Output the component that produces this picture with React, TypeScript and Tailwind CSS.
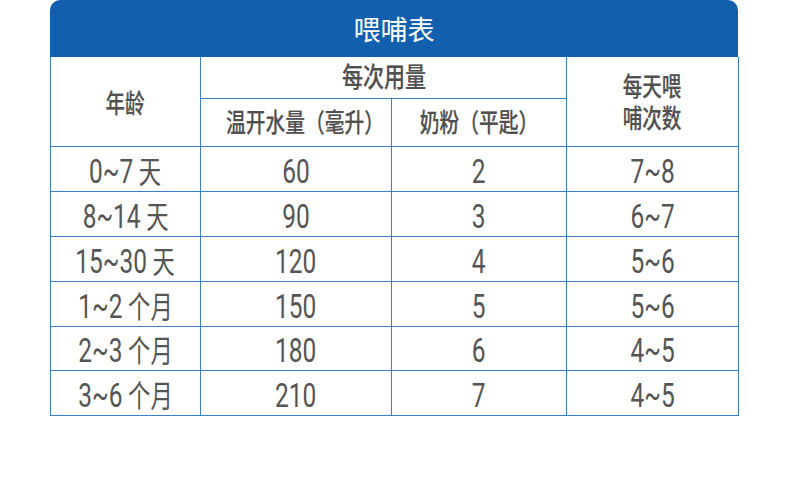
import React from "react";

const rows = [
  ["0~7", "天", "60", "2", "7~8", 45],
  ["8~14", "天", "90", "3", "6~7", 45],
  ["15~30", "天", "120", "4", "5~6", 45],
  ["1~2", "个月", "150", "5", "5~6", 45],
  ["2~3", "个月", "180", "6", "4~5", 44],
  ["3~6", "个月", "210", "7", "4~5", 45],
] as const;

const T = ({ children, cls = "" }: { children: React.ReactNode; cls?: string }) => (
  <span className={`inline-block origin-center whitespace-nowrap ${cls}`}>{children}</span>
);

const bd = "border border-[#3d7cc6] text-center align-middle p-0";
const hd = "font-medium [-webkit-text-stroke:0.2px_#505050]";

export default function App() {
  return (
    <div className="w-[790px] h-[480px] bg-white" style={{ fontFamily: 'Roboto, "Noto Sans CJK SC", sans-serif' }}>
      <div className="ml-[50px] w-[688px]">
        <div className="h-[57px] rounded-t-[10px] bg-[#1260ad] flex items-center justify-center text-white text-[27px] leading-none" style={{ fontFamily: '"Noto Sans CJK SC", sans-serif' }}>
          喂哺表
        </div>
        <table className="w-[688px] border-collapse table-fixed text-[#505050]">
          <colgroup>
            <col className="w-[150px]" />
            <col className="w-[191px]" />
            <col className="w-[175px]" />
            <col className="w-[172px]" />
          </colgroup>
          <tbody>
            <tr className="h-[41px]">
              <td rowSpan={2} className={`${bd} border-t-0 text-[26px] leading-none pt-[6px] ${hd}`}>
                <T cls="scale-x-[0.75]">年龄</T>
              </td>
              <td colSpan={2} className={`${bd} border-t-0 text-[27px] leading-none pt-[2px] ${hd}`}>
                <T cls="scale-x-[0.78]">每次用量</T>
              </td>
              <td rowSpan={2} className={`${bd} border-t-0 text-[26px] leading-[32px] pt-[4px] ${hd}`}>
                <T cls="scale-x-[0.75]">每天喂</T>
                <br />
                <T cls="scale-x-[0.75]">哺次数</T>
              </td>
            </tr>
            <tr className="h-[48px]">
              <td className={`${bd} text-[26px] leading-none pt-[2px] ${hd}`}>
                <T cls="scale-x-[0.76]">温开水量（毫升）</T>
              </td>
              <td className={`${bd} text-[26px] leading-none pt-[2px] ${hd}`}>
                <T cls="scale-x-[0.76]">奶粉（平匙）</T>
              </td>
            </tr>
            {rows.map((r, i) => (
              <tr key={i} style={{ height: r[5] }}>
                <td className={`${bd} text-[34px] leading-none pt-[4px] text-[#555555]`}>
                  <T cls="scale-x-[0.72]">
                    {r[0]}
                    <span className="text-[31px]"> {r[1]}</span>
                  </T>
                </td>
                {[r[2], r[3], r[4]].map((c, j) => (
                  <td key={j} className={`${bd} text-[34px] leading-none pt-[4px] text-[#555555]`}>
                    <T cls="scale-x-[0.72]">{c}</T>
                  </td>
                ))}
              </tr>
            ))}
          </tbody>
        </table>
      </div>
    </div>
  );
}
